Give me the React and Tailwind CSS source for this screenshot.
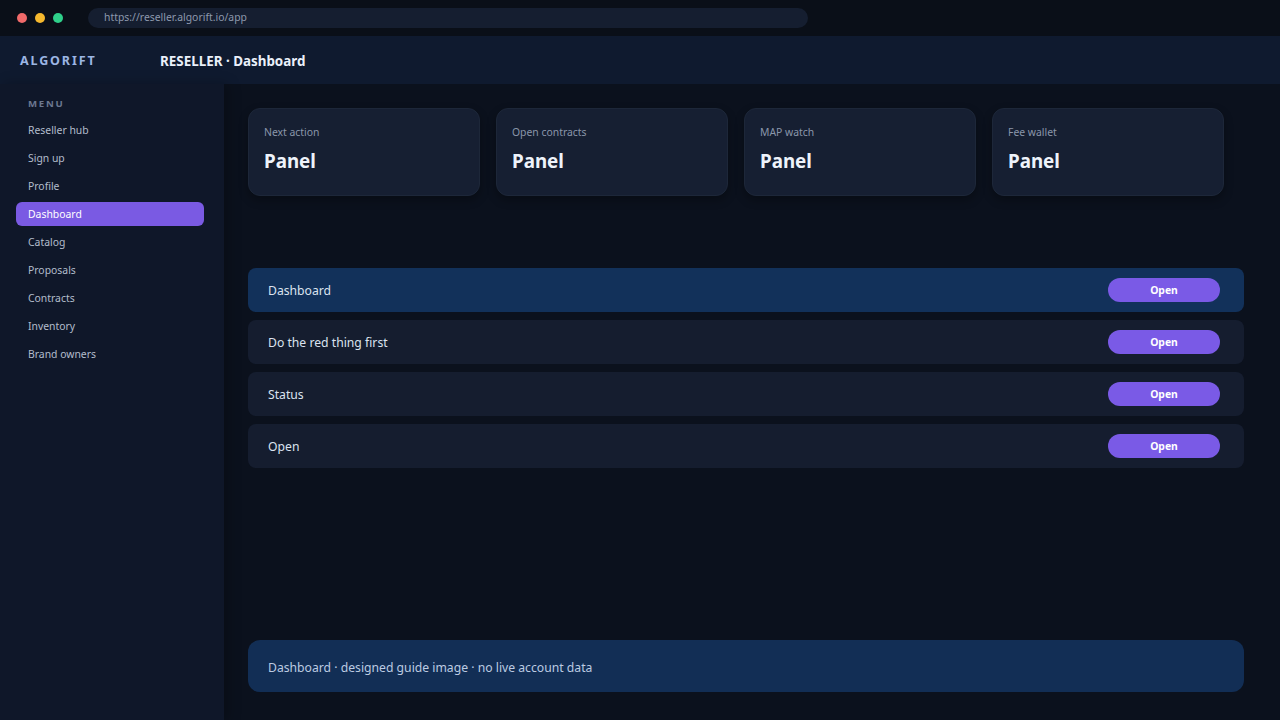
import React from "react";

const menu = ["Reseller hub", "Sign up", "Profile", "Dashboard", "Catalog", "Proposals", "Contracts", "Inventory", "Brand owners"];
const cards = ["Next action", "Open contracts", "MAP watch", "Fee wallet"];
const rows = ["Dashboard", "Do the red thing first", "Status", "Open"];

export default function App() {
  return (
    <div className="w-[1280px] h-[720px] flex flex-col bg-[#0b111d] overflow-hidden" style={{ fontFamily: '"Noto Sans", "Open Sans", sans-serif' }}>
      <div className="h-[36px] shrink-0 bg-[#0a0f18] flex items-center px-[17px]">
        <div className="flex gap-[8px]">
          <span className="w-[10px] h-[10px] rounded-full bg-[#f06a6a]" />
          <span className="w-[10px] h-[10px] rounded-full bg-[#f5b82e]" />
          <span className="w-[10px] h-[10px] rounded-full bg-[#2fd08a]" />
        </div>
        <div className="ml-[25px] w-[720px] h-[20px] rounded-full bg-[#151e30] flex items-center px-[16px] text-[10.4px] text-[#8d99ad]">https://reseller.algorift.io/app</div>
      </div>
      <div className="h-[48px] shrink-0 bg-[#0f1a2f] flex items-center">
        <div className="w-[160px] pl-[20px] text-[12.5px] font-bold tracking-[0.15em] text-[#9cb6e4] pt-[2px]">ALGORIFT</div>
        <div className="text-[13.4px] font-bold text-[#eaf0fa] pt-[2px]">RESELLER · Dashboard</div>
      </div>
      <div className="flex flex-1 min-h-0">
        <aside className="w-[224px] shrink-0 bg-[#0f1729] pl-[16px] pr-[20px] pt-[13px] shadow-[4px_0_12px_rgba(0,0,0,0.25)]">
          <div className="px-[12px] text-[9.6px] font-bold tracking-[0.18em] text-[#6b7890] h-[13px] leading-[13px]">MENU</div>
          <div className="mt-[8px] flex flex-col gap-[4px]">
            {menu.map((m) => (
              <div key={m} className={`h-[24px] px-[12px] pt-[1px] flex items-center rounded-md text-[10.4px] ${m === "Dashboard" ? "bg-[#7a5ae3] text-white" : "text-[#b3bdcc]"}`}>{m}</div>
            ))}
          </div>
        </aside>
        <main className="flex-1 flex flex-col pl-[24px] pr-[36px] pt-[24px] pb-[28px]">
          <div className="flex gap-[16px]">
            {cards.map((c) => (
              <div key={c} className="w-[232px] h-[88px] rounded-xl bg-[#161f32] border border-[#1d2739] px-[15px] pt-[16px] shadow-[0_4px_10px_rgba(0,0,0,0.3)]">
                <div className="text-[10.4px] text-[#8a96aa] leading-[14px]">{c}</div>
                <div className="mt-[10px] text-[18.8px] font-bold text-[#eef3fb] leading-[24px]">Panel</div>
              </div>
            ))}
          </div>
          <div className="mt-[72px] flex flex-col gap-[8px]">
            {rows.map((r, i) => (
              <div key={r} className={`h-[44px] rounded-lg flex items-center pl-[20px] pr-[24px] ${i === 0 ? "bg-[#12315a]" : "bg-[#151d2f]"}`}>
                <span className="text-[12.2px] text-[#dbe3ef] pt-[3px]">{r}</span>
                <button className="ml-auto w-[112px] h-[24px] rounded-full bg-[#7a5ae6] text-white text-[10.4px] font-bold pt-[2px]">Open</button>
              </div>
            ))}
          </div>
          <div className="mt-auto h-[52px] rounded-xl bg-[#122e55] flex items-center px-[20px] text-[12.2px] text-[#bccbe2] pt-[4px]">
            Dashboard · designed guide image · no live account data
          </div>
        </main>
      </div>
    </div>
  );
}
